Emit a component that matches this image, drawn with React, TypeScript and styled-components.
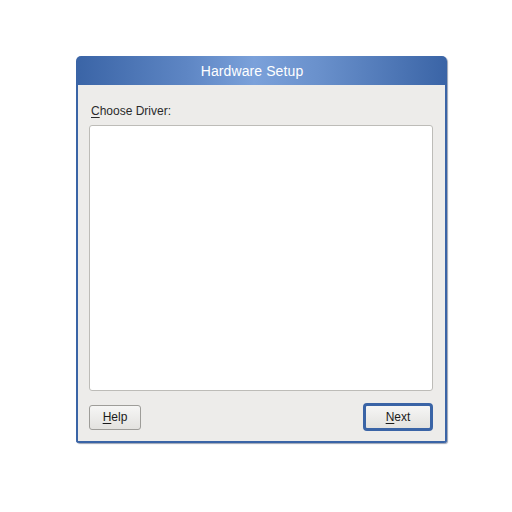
import React from "react";
import styled, { createGlobalStyle } from "styled-components";

const Global = createGlobalStyle`
  html, body { margin: 0; padding: 0; background: #ffffff; }
  body { font-family: "Liberation Sans", Arial, sans-serif; }
`;

const Page = styled.div`
  width: 512px;
  height: 512px;
  box-sizing: border-box;
  padding: 56px 0 0 76px;
  display: flex;
  align-items: flex-start;
`;

const Window = styled.div`
  width: 371px;
  display: flex;
  flex-direction: column;
  border-radius: 5px 5px 3px 3px;
  overflow: hidden;
  box-shadow: 1px 1px 1px rgba(30, 50, 90, 0.45);
`;

const TitleBar = styled.div`
  height: 29px;
  box-sizing: border-box;
  padding-right: 19px;
  display: flex;
  align-items: center;
  justify-content: center;
  background: linear-gradient(to right, #3a64a6 0%, #5e86c4 30%, #7ba1da 48%, #6a91cc 65%, #3a64a6 100%);
  color: #ffffff;
  font-size: 14px;
  letter-spacing: 0.1px;
`;

const Body = styled.div`
  background: #edecea;
  border: 2px solid #3a64a6;
  border-top: none;
  padding: 19px 12px 10px 11px;
  display: flex;
  flex-direction: column;
`;

const Label = styled.div`
  font-size: 12px;
  line-height: 15px;
  color: #2a2a2a;
  margin-left: 2px;
  margin-bottom: 6px;
`;

const ListBox = styled.div`
  height: 266px;
  box-sizing: border-box;
  background: #ffffff;
  border: 1px solid #bdbcb8;
  border-radius: 3px;
`;

const ButtonRow = styled.div`
  margin-top: 12px;
  height: 28px;
  display: flex;
  align-items: center;
  justify-content: space-between;
`;

const Button = styled.button<{ $focused?: boolean; $w: number; $h: number }>`
  width: ${(p) => p.$w}px;
  height: ${(p) => p.$h}px;
  box-sizing: border-box;
  border: ${(p) => (p.$focused ? "3px solid #3a64a6" : "1px solid #9e9d99")};
  border-radius: ${(p) => (p.$focused ? "4px" : "3px")};
  background: linear-gradient(to bottom, #f6f6f5, #e3e2df);
  font-family: "Liberation Sans", Arial, sans-serif;
  font-size: 12px;
  color: #1a1a1a;
  padding: 0;
  display: flex;
  align-items: center;
  justify-content: center;
`;

const U = styled.span`
  text-decoration: underline;
  text-underline-offset: 2px;
`;

export default function App() {
  return (
    <>
      <Global />
      <Page>
        <Window>
          <TitleBar>Hardware Setup</TitleBar>
          <Body>
            <Label>
              <U>C</U>hoose Driver:
            </Label>
            <ListBox />
            <ButtonRow>
              <Button $w={52} $h={25}>
                <U>H</U>elp
              </Button>
              <Button $focused $w={70} $h={28}>
                <U>N</U>ext
              </Button>
            </ButtonRow>
          </Body>
        </Window>
      </Page>
    </>
  );
}
